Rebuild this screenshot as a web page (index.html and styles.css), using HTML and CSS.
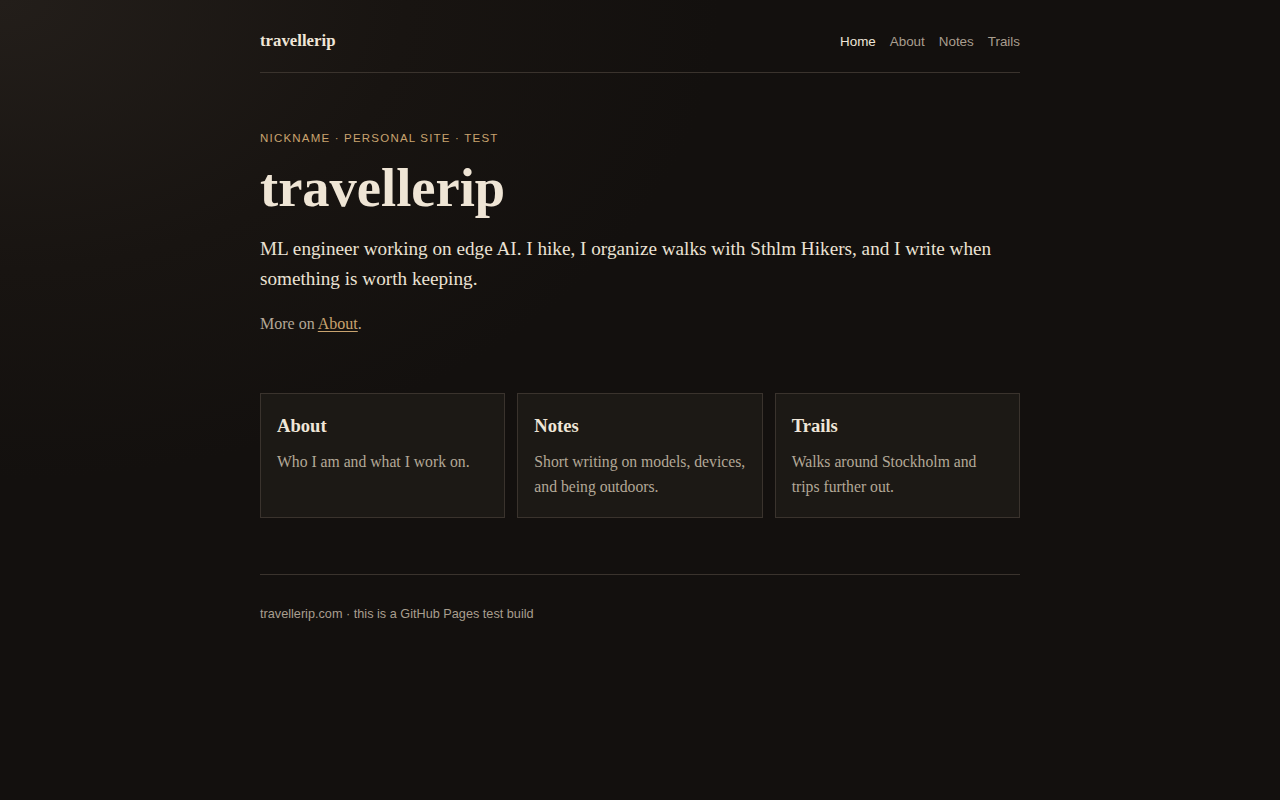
FILE: index.html
```html
<!DOCTYPE html>
<html lang="en">
<head>
<meta charset="utf-8">
<title>travellerip</title>
<link rel="stylesheet" href="styles.css">
</head>
<body>
<div class="page">
  <header class="site-header">
    <a class="brand" href="#">travellerip</a>
    <nav class="nav">
      <a class="nav-link active" href="#">Home</a>
      <a class="nav-link" href="#">About</a>
      <a class="nav-link" href="#">Notes</a>
      <a class="nav-link" href="#">Trails</a>
    </nav>
  </header>
  <main>
    <section class="hero">
      <p class="eyebrow">Nickname · Personal site · Test</p>
      <h1 class="title">travellerip</h1>
      <p class="lead">ML engineer working on edge AI. I hike, I organize walks with Sthlm Hikers, and I write when something is worth keeping.</p>
      <p class="more">More on <a href="#">About</a>.</p>
    </section>
    <section class="cards">
      <a class="card" href="#">
        <h2 class="card-title">About</h2>
        <p class="card-text">Who I am and what I work on.</p>
      </a>
      <a class="card" href="#">
        <h2 class="card-title">Notes</h2>
        <p class="card-text">Short writing on models, devices, and being outdoors.</p>
      </a>
      <a class="card" href="#">
        <h2 class="card-title">Trails</h2>
        <p class="card-text">Walks around Stockholm and trips further out.</p>
      </a>
    </section>
  </main>
  <footer class="site-footer">
    <p>travellerip.com · this is a GitHub Pages test build</p>
  </footer>
</div>
</body>
</html>
```
FILE: styles.css
```css
html, body {
  margin: 0;
  padding: 0;
}
body {
  min-height: 800px;
  background-color: #13100e;
  background-image: radial-gradient(ellipse 900px 600px at 0 0, #231e1a 0%, #181411 45%, #13100e 80%);
  background-repeat: no-repeat;
  color: #ede4d6;
  font-family: "Liberation Serif", "Times New Roman", serif;
}
a {
  color: inherit;
  text-decoration: none;
}
.page {
  width: 760px;
  margin: 0 auto;
}
.site-header {
  display: flex;
  justify-content: space-between;
  align-items: center;
  padding: 28px 0 19px;
  border-bottom: 1px solid #3a332d;
}
.brand {
  font-weight: 700;
  font-size: 16.8px;
  line-height: 25px;
  color: #efe6d8;
}
.nav {
  display: flex;
  gap: 14px;
  font-family: "Liberation Sans", Arial, sans-serif;
  font-size: 13.4px;
  line-height: 23px;
  padding-top: 2px;
}
.nav-link {
  color: #a99e8f;
}
.nav-link.active {
  color: #efe6d8;
}
.hero {
  padding-top: 57px;
}
.eyebrow {
  margin: 0;
  font-family: "Liberation Sans", Arial, sans-serif;
  font-size: 11.5px;
  line-height: 16px;
  letter-spacing: 1.2px;
  text-transform: uppercase;
  color: #c9a36f;
}
.title {
  margin: 11px 0 15px;
  font-size: 54.5px;
  line-height: 62px;
  font-weight: 700;
  color: #efe5d5;
}
.lead {
  margin: 0;
  font-size: 19.2px;
  line-height: 30px;
  color: #ebe2d4;
}
.more {
  margin: 17px 0 0;
  font-size: 16px;
  line-height: 25px;
  color: #b3a897;
}
.more a {
  color: #c9a36f;
  text-decoration: underline;
  text-underline-offset: 2px;
}
.cards {
  display: grid;
  grid-template-columns: repeat(3, 1fr);
  gap: 12px;
  margin-top: 57px;
}
.card {
  display: block;
  padding: 19px 16px 18px;
  background: #1c1915;
  border: 1px solid #3a332d;
}
.card-title {
  margin: 0 0 11px;
  font-size: 18.6px;
  line-height: 25px;
  font-weight: 700;
  color: #efe6d8;
}
.card-text {
  margin: 0;
  font-size: 15.7px;
  line-height: 25px;
  color: #b3a897;
}
.site-footer {
  margin-top: 56px;
  border-top: 1px solid #3a332d;
  padding-top: 29px;
}
.site-footer p {
  margin: 0;
  font-family: "Liberation Sans", Arial, sans-serif;
  font-size: 12.7px;
  line-height: 20px;
  color: #a99e8f;
}
```
